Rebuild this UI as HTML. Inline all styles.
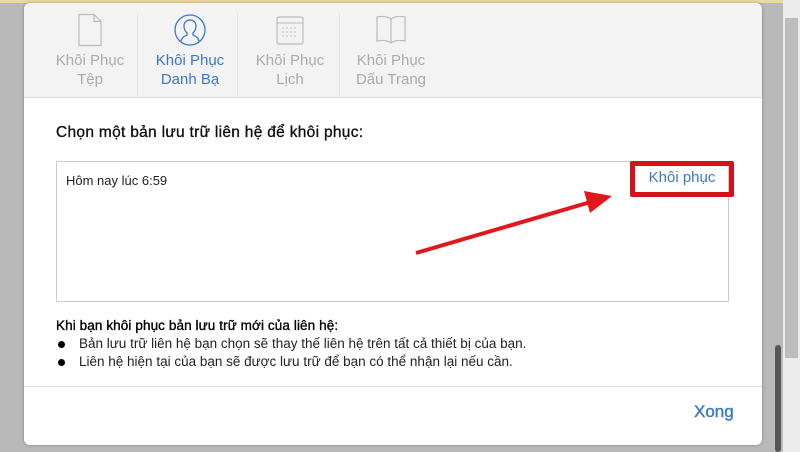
<!DOCTYPE html>
<html><head><meta charset="utf-8"><style>
*{margin:0;padding:0;box-sizing:border-box}
body{width:800px;height:452px;overflow:hidden;background:#b9b9b9;font-family:"Liberation Sans",sans-serif;position:relative}
.top{position:absolute;left:0;top:0;width:800px;height:3px;background:#e8dc9c}
.sb{position:absolute;left:783px;top:0;width:17px;height:452px;background:#ececec}
.sb .tr{position:absolute;left:2px;top:18px;width:13px;height:340px;background:#bdbdbd}
.thumb{position:absolute;left:775px;top:345px;width:6px;height:107px;background:#555;border-radius:3px}
.modal{position:absolute;left:24px;top:3px;width:738px;height:442px;background:#fff;border-radius:6px;overflow:hidden;box-shadow:0 0 3px rgba(0,0,0,.3)}
.hdr{height:95px;background:#f3f3f3;border-bottom:1px solid #ddd;position:relative}
.tab{position:absolute;top:10px;width:100px;text-align:center;font-size:15px;line-height:19px;color:#aaa}
.tab svg{display:block;margin:0 auto 4px}
.sep{position:absolute;top:10px;width:1px;height:84px;background:#e2e2e2}
h3{position:absolute;left:32px;top:121px;font-size:15.5px;font-weight:normal;color:#111;-webkit-text-stroke:.35px #111;letter-spacing:.3px}
.box{position:absolute;left:32px;top:158px;width:673px;height:141px;border:1px solid #ccc}
.box .d{position:absolute;left:9px;top:11px;font-size:13px;color:#222}
.rb{position:absolute;left:606px;top:158px;width:104px;height:36px;border:5px solid #d4121a;border-radius:2px;color:#3b79c4;font-size:15px;text-align:center;line-height:24px}
.info{position:absolute;left:32px;top:315px;font-size:13.5px;color:#111}
.info b{font-weight:normal;display:block;margin-bottom:3px;color:#000;-webkit-text-stroke:.35px #000;letter-spacing:.1px}
.info div.li{position:relative;padding-left:23px;margin-bottom:3px;color:#222;letter-spacing:0}
.info div.li:before{content:"";position:absolute;left:2px;top:5px;width:7px;height:7px;border-radius:50%;background:#000}
.foot{position:absolute;left:0;top:383px;width:738px;height:1px;background:#ddd}
.xong{position:absolute;left:670px;top:399px;font-size:17px;color:#3b79c4;-webkit-text-stroke:.4px #3b79c4}
</style></head><body>
<div class="top"></div>
<div class="sb"><div class="tr"></div></div>
<div class="thumb"></div>
<div class="modal">
 <div class="hdr">
  <div class="tab" style="left:16px"><svg width="30" height="34" viewBox="0 0 30 34"><path d="M4 1.5h15l7 7v24H4z M19 1.5v7h7" fill="none" stroke="#bbb" stroke-width="1.2"/></svg>Khôi Phục<br>Tệp</div>
  <div class="sep" style="left:113px"></div>
  <div class="tab" style="left:116px;color:#3b79c4"><svg width="34" height="34" viewBox="0 0 34 34"><circle cx="17" cy="17" r="15" fill="none" stroke="#3b79c4" stroke-width="1.3"/><path d="M8 28c1-4 4-5 6-6v-2c-2-2-3-4-3-7 0-4 3-6 6-6s6 2 6 6c0 3-1 5-3 7v2c2 1 5 2 6 6" fill="none" stroke="#3b79c4" stroke-width="1.3"/></svg>Khôi Phục<br>Danh Bạ</div>
  <div class="sep" style="left:213px"></div>
  <div class="tab" style="left:216px"><svg width="30" height="34" viewBox="0 0 30 34"><rect x="2" y="4" width="26" height="27" rx="2" fill="none" stroke="#bbb" stroke-width="1.2"/><line x1="2" y1="10" x2="28" y2="10" stroke="#bbb"/><g fill="#bbb"><circle cx="8" cy="15" r=".8"/><circle cx="12" cy="15" r=".8"/><circle cx="16" cy="15" r=".8"/><circle cx="20" cy="15" r=".8"/><circle cx="8" cy="19" r=".8"/><circle cx="12" cy="19" r=".8"/><circle cx="16" cy="19" r=".8"/><circle cx="20" cy="19" r=".8"/><circle cx="8" cy="23" r=".8"/><circle cx="12" cy="23" r=".8"/><circle cx="16" cy="23" r=".8"/><circle cx="20" cy="23" r=".8"/></g></svg>Khôi Phục<br>Lịch</div>
  <div class="sep" style="left:315px"></div>
  <div class="tab" style="left:317px"><svg width="34" height="34" viewBox="0 0 34 34"><path d="M17 6c-4-3-9-3-14-2v24c5-1 10-1 14 2c4-3 9-3 14-2V4c-5-1-10-1-14 2zM17 6v24" fill="none" stroke="#bbb" stroke-width="1.2"/></svg>Khôi Phục<br>Dấu Trang</div>
 </div>
 <h3>Chọn một bản lưu trữ liên hệ để khôi phục:</h3>
 <div class="box"><div class="d">Hôm nay lúc 6:59</div></div>
 <div class="rb">Khôi phục</div>
 <svg style="position:absolute;left:0;top:0" width="738" height="442"><line x1="392" y1="250" x2="570" y2="198" stroke="#e3161c" stroke-width="4"/><polygon points="588,193 560,188 566,210" fill="#e3161c"/></svg>
 <div class="info"><b>Khi bạn khôi phục bản lưu trữ mới của liên hệ:</b>
  <div class="li">Bản lưu trữ liên hệ bạn chọn sẽ thay thế liên hệ trên tất cả thiết bị của bạn.</div>
  <div class="li">Liên hệ hiện tại của bạn sẽ được lưu trữ để bạn có thể nhận lại nếu cần.</div>
 </div>
 <div class="foot"></div>
 <div class="xong">Xong</div>
</div>
</body></html>
